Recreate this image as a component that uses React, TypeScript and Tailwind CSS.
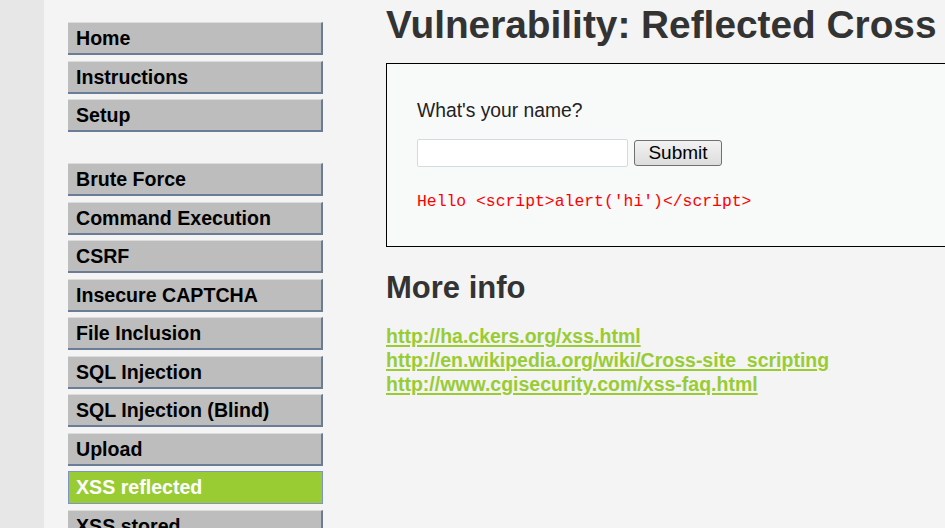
const mainMenu = ["Home", "Instructions", "Setup"];

const vulnMenu = [
  "Brute Force",
  "Command Execution",
  "CSRF",
  "Insecure CAPTCHA",
  "File Inclusion",
  "SQL Injection",
  "SQL Injection (Blind)",
  "Upload",
  "XSS reflected",
  "XSS stored",
];

const links = [
  "http://ha.ckers.org/xss.html",
  "http://en.wikipedia.org/wiki/Cross-site_scripting",
  "http://www.cgisecurity.com/xss-faq.html",
];

function MenuItem({ label, selected }: { label: string; selected?: boolean }) {
  if (selected) {
    return (
      <div className="h-[33px] border border-[#7f94c4] bg-[#99cc33] pl-[7px] text-[19.6px] font-bold leading-[31px] text-white">
        {label}
      </div>
    );
  }
  return (
    <div className="h-[33px] border-t border-t-[#dcdcdc] border-r-2 border-r-[#6b7c96] border-b-2 border-b-[#6b7c96] bg-[#bdbdbd] pl-[8px] text-[19.6px] font-bold leading-[30px] text-black">
      {label}
    </div>
  );
}

export default function App() {
  return (
    <div className="flex h-[528px] w-[945px] overflow-hidden bg-[#f4f4f4] font-['Liberation_Sans',Arial,sans-serif]">
      <div className="h-full w-[44px] shrink-0 bg-[#e7e7e7]" />

      <div className="ml-[24px] w-[255px] shrink-0 pt-[22px]">
        <div className="flex flex-col gap-[5.5px]">
          {mainMenu.map((m) => (
            <MenuItem key={m} label={m} />
          ))}
        </div>
        <div className="mt-[31px] flex flex-col gap-[5.5px]">
          {vulnMenu.map((m) => (
            <MenuItem key={m} label={m} selected={m === "XSS reflected"} />
          ))}
        </div>
      </div>

      <div className="ml-[63px] shrink-0 pt-[3px]">
        <h1 className="whitespace-nowrap text-[38.8px] font-bold leading-[44px] text-[#333]">
          Vulnerability: Reflected Cross
        </h1>

        <div className="mt-[16px] h-[184px] w-[640px] border border-black bg-[#f8f9f9] pl-[30px] pt-[33px]">
          <p className="text-[19.3px] leading-[28px] text-[#222]">What's your name?</p>
          <form className="mt-[14px] flex items-center gap-[6px]">
            <input
              type="text"
              className="h-[28px] w-[211px] rounded-[2px] border border-[#d5d9e0] bg-white px-1 outline-none"
            />
            <button
              type="button"
              className="h-[26px] w-[88px] rounded-[3px] border border-[#707070] bg-gradient-to-b from-[#f2f2f2] to-[#dddddd] text-[19px] leading-[24px] text-black"
            >
              Submit
            </button>
          </form>
          <pre className="mt-[24px] font-['Liberation_Mono','Courier_New',monospace] text-[16.4px] leading-[22px] text-[#ff0000]">
            Hello &lt;script&gt;alert('hi')&lt;/script&gt;
          </pre>
        </div>

        <h2 className="mt-[23px] text-[31px] font-bold leading-[36px] text-[#333]">More info</h2>
        <ul className="mt-[19px]">
          {links.map((l) => (
            <li key={l} className="leading-[23px]">
              <a
                href="#"
                className="text-[19.5px] font-bold leading-[23px] text-[#99cc33] underline decoration-2 underline-offset-[2px]"
              >
                {l}
              </a>
            </li>
          ))}
        </ul>
      </div>
    </div>
  );
}
